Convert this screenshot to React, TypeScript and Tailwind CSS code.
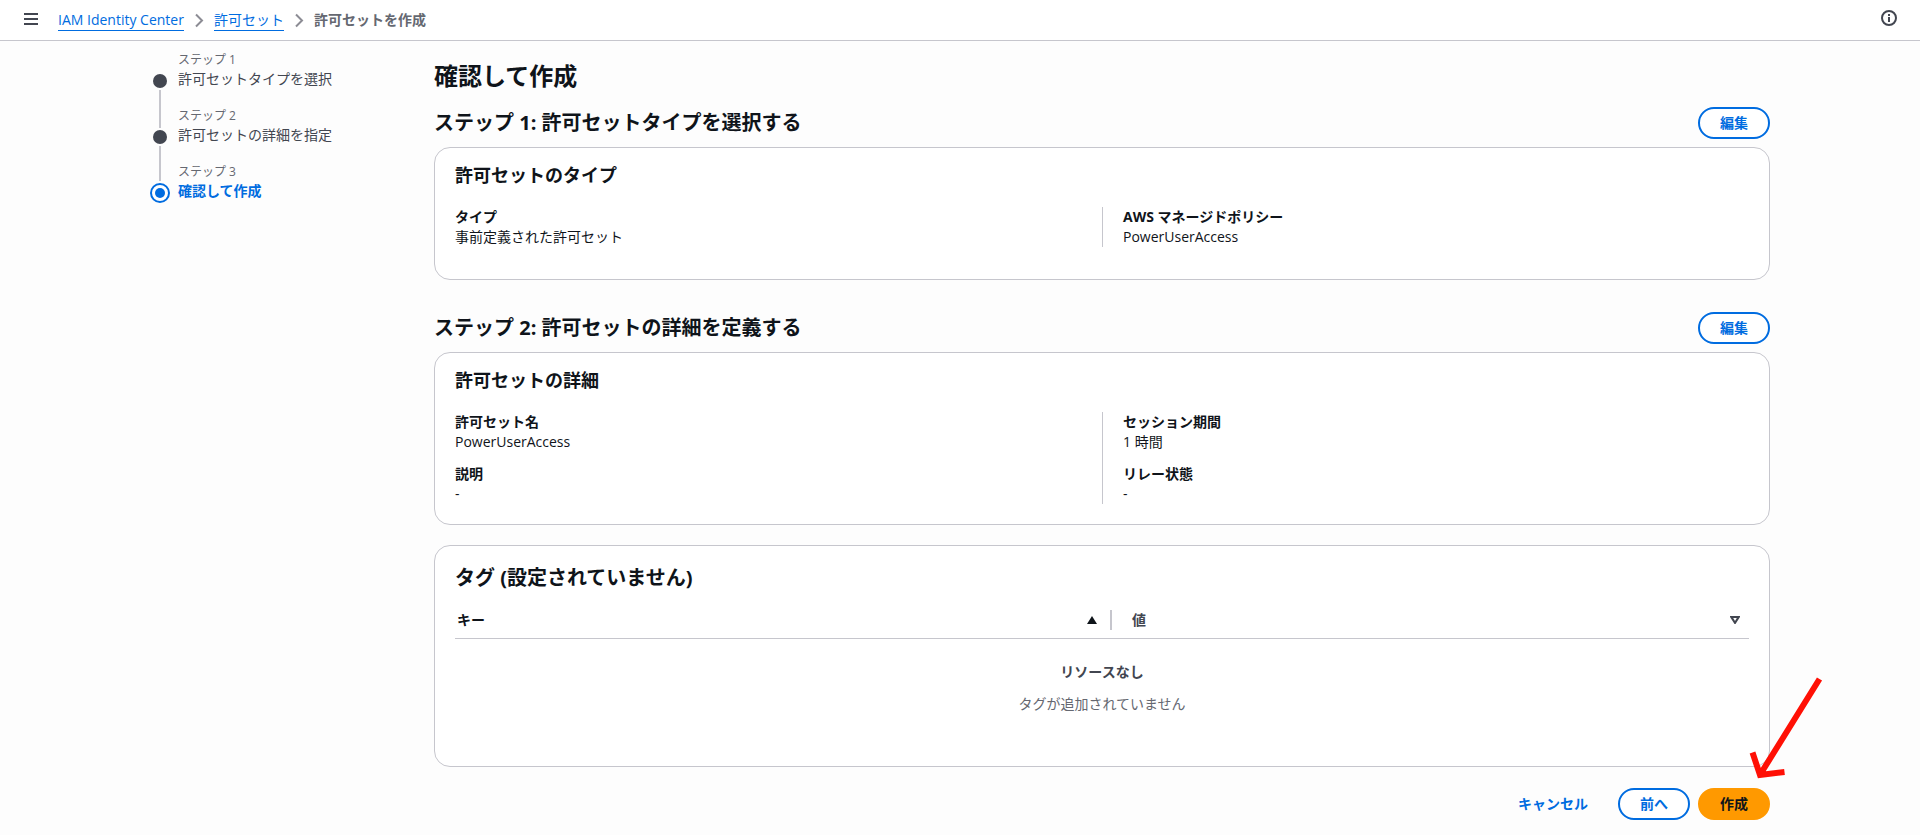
import React, { useState } from 'react';

type StepItem = { label: string; title: string };
type Field = { label: string; value: string };

const steps: StepItem[] = [
    { label: 'ステップ 1', title: '許可セットタイプを選択' },
    { label: 'ステップ 2', title: '許可セットの詳細を指定' },
    { label: 'ステップ 3', title: '確認して作成' },
];

const ChevronIcon: React.FC = () => (
    <svg className="h-4 w-4 text-[#8c8c94]" viewBox="0 0 16 16" fill="none" stroke="currentColor" strokeWidth="2" aria-hidden="true">
        <path d="M5 2.500 11 8.500 5 14.500" />
    </svg>
);

const TopBar: React.FC = () => (
    <header className="flex items-center justify-between border-b border-[#c6c6cd] bg-white pl-6 pr-[23px]">
        <div className="flex h-10 items-center gap-5">
            <button type="button" aria-label="メニュー" className="flex h-4 w-3.5 items-center text-[#424650]">
                <svg className="h-3.5 w-3.5" viewBox="0 0 14 14" fill="none" stroke="currentColor" strokeWidth="2">
                    <path d="M0 1h14M0 6h14M0 11h14" />
                </svg>
            </button>
            <nav aria-label="パンくずリスト">
                <ol className="flex items-center gap-[7px]">
                    <li><a href="#center" className="block border-b border-[#006ce0] leading-5 text-[#006ce0]">IAM Identity Center</a></li>
                    <li><ChevronIcon /></li>
                    <li><a href="#sets" className="block border-b border-[#006ce0] leading-5 text-[#006ce0]">許可セット</a></li>
                    <li><ChevronIcon /></li>
                    <li className="font-bold text-[#656871]">許可セットを作成</li>
                </ol>
            </nav>
        </div>
        <button type="button" aria-label="情報" className="mb-1 text-[#424650]">
            <svg className="h-4 w-4" viewBox="0 0 16 16" fill="none" stroke="currentColor" strokeWidth="2">
                <circle cx="8" cy="8" r="7" />
                <path d="M8 7v5M8 4v2" />
            </svg>
        </button>
    </header>
);

const StepNav: React.FC<{ current: number }> = ({ current }) => (
    <nav aria-label="ステップ" className="w-[284px] shrink-0 pt-2.5">
        <ol>
            {steps.map((step, i) => {
                const active = i === current;
                return (
                    <li key={step.label} className="flex h-14 gap-2">
                        <div className="flex w-5 flex-col items-center">
                            <div className={`w-0.5 shrink-0 ${active ? 'h-[18px]' : 'h-[21px]'} ${i > 0 ? 'bg-[#c6c6cd]' : ''}`} />
                            {active ? (
                                <div className="my-0.5 flex h-5 w-5 shrink-0 items-center justify-center rounded-full border-2 border-[#006ce0] bg-white">
                                    <div className="h-2.5 w-2.5 rounded-full bg-[#006ce0]" />
                                </div>
                            ) : (
                                <div className="my-0.5 h-3.5 w-3.5 shrink-0 rounded-full bg-[#424650]" />
                            )}
                            {i < steps.length - 1 && <div className="w-0.5 grow bg-[#c6c6cd]" />}
                        </div>
                        <div>
                            <div className="text-xs leading-[18px] text-[#656871]">{step.label}</div>
                            <a
                                href={`#step-${i + 1}`}
                                aria-current={active ? 'step' : undefined}
                                className={`block leading-5 ${active ? 'font-bold text-[#006ce0]' : 'text-[#424650]'}`}
                            >
                                {step.title}
                            </a>
                        </div>
                    </li>
                );
            })}
        </ol>
    </nav>
);

const OutlineButton: React.FC<{ children: React.ReactNode }> = ({ children }) => (
    <button type="button" className="h-8 rounded-full border-2 border-[#006ce0] bg-white px-5 font-bold leading-5 text-[#006ce0]">
        {children}
    </button>
);

const SectionHeader: React.FC<{ title: string }> = ({ title }) => (
    <div className="mb-2 flex items-center justify-between">
        <h2 className="text-xl leading-6 font-bold">{title}</h2>
        <OutlineButton>編集</OutlineButton>
    </div>
);

const FieldList: React.FC<{ fields: Field[] }> = ({ fields }) => (
    <dl className="flex flex-col gap-3">
        {fields.map((field) => (
            <div key={field.label}>
                <dt className="font-bold leading-5">{field.label}</dt>
                <dd className="leading-5">{field.value}</dd>
            </div>
        ))}
    </dl>
);

const DetailCard: React.FC<{ title: string; left: Field[]; right: Field[]; className: string }> = ({ title, left, right, className }) => (
    <div className={`rounded-2xl border border-[#c6c6cd] bg-white px-5 pt-4 ${className}`}>
        <h3 className="text-lg leading-[23px] font-bold">{title}</h3>
        <div className="mt-5 grid grid-cols-2">
            <FieldList fields={left} />
            <div className="border-l border-[#c6c6cd] pl-5">
                <FieldList fields={right} />
            </div>
        </div>
    </div>
);

const TagTable: React.FC = () => {
    const [ascending, setAscending] = useState<boolean>(true);

    return (
        <div className="mt-5 rounded-2xl border border-[#c6c6cd] bg-white px-5 pt-5 pb-[52px]">
            <h2 className="text-xl leading-6 font-bold">タグ (設定されていません)</h2>
            <table className="mt-3 w-full table-fixed">
                <thead>
                    <tr className="border-b border-[#c6c6cd]">
                        <th className="w-[51%] py-2 pr-[3px] pl-0.5 text-left">
                            <button type="button" onClick={() => setAscending(!ascending)} className="flex w-full items-center justify-between border-r-2 border-[#c6c6cd] pr-[13px] font-bold leading-5">
                                キー
                                <svg className={`h-2.5 w-2.5 ${ascending ? '' : 'rotate-180'}`} viewBox="0 0 10 10" fill="currentColor" aria-hidden="true">
                                    <path d="M5 1 10 9H0z" />
                                </svg>
                            </button>
                        </th>
                        <th className="py-2 pr-[9px] pl-[17px] text-left">
                            <button type="button" className="flex w-full items-center justify-between font-bold leading-5 text-[#424650]">
                                値
                                <svg className="h-2.5 w-2.5" viewBox="0 0 10 10" fill="currentColor" fillRule="evenodd" aria-hidden="true">
                                    <path d="M0 1h10v1L5.500 9h-1L0 2zM3.200 3 5 6 6.800 3z" />
                                </svg>
                            </button>
                        </th>
                    </tr>
                </thead>
                <tbody>
                    <tr>
                        <td colSpan={2} className="pt-[23px] text-center leading-5">
                            <p className="font-bold text-[#424650]">リソースなし</p>
                            <p className="mt-3 text-[#656871]">タグが追加されていません</p>
                        </td>
                    </tr>
                </tbody>
            </table>
        </div>
    );
};

const App: React.FC = () => {
    return (
        <div lang="ja" className="min-h-screen bg-[#fdfdfd] font-['Open_Sans','Noto_Sans_CJK_JP',sans-serif] text-sm text-[#0f141a]">
            <TopBar />
            <div className="mx-auto flex max-w-[1620px]">
                <StepNav current={2} />
                <main className="min-w-0 grow pt-5 pb-3.5">
                    <h1 className="mb-4 text-2xl leading-[30px] font-bold">確認して作成</h1>
                    <section>
                        <SectionHeader title="ステップ 1: 許可セットタイプを選択する" />
                        <DetailCard
                            title="許可セットのタイプ"
                            className="pb-8"
                            left={[{ label: 'タイプ', value: '事前定義された許可セット' }]}
                            right={[{ label: 'AWS マネージドポリシー', value: 'PowerUserAccess' }]}
                        />
                    </section>
                    <section className="mt-8">
                        <SectionHeader title="ステップ 2: 許可セットの詳細を定義する" />
                        <DetailCard
                            title="許可セットの詳細"
                            className="pb-5"
                            left={[
                                { label: '許可セット名', value: 'PowerUserAccess' },
                                { label: '説明', value: '-' },
                            ]}
                            right={[
                                { label: 'セッション期間', value: '1 時間' },
                                { label: 'リレー状態', value: '-' },
                            ]}
                        />
                        <TagTable />
                    </section>
                    <div className="relative mt-[21px] flex justify-end gap-2">
                        <button type="button" className="mr-0.5 h-8 px-5 font-bold leading-5 text-[#006ce0]">キャンセル</button>
                        <OutlineButton>前へ</OutlineButton>
                        <button type="button" className="h-8 rounded-full border-2 border-[#ff9900] bg-[#ff9900] px-5 font-bold leading-5">作成</button>
                        <svg className="pointer-events-none absolute -top-[118px] -right-[55px] h-[115px] w-20" viewBox="0 0 80 115" fill="none" stroke="#ff1005" strokeWidth="6" aria-hidden="true">
                            <path d="M74.500 9 15.500 104M7.500 82.500l7.500 22.500 24.500-3" />
                        </svg>
                    </div>
                </main>
            </div>
        </div>
    );
};

export default App;
